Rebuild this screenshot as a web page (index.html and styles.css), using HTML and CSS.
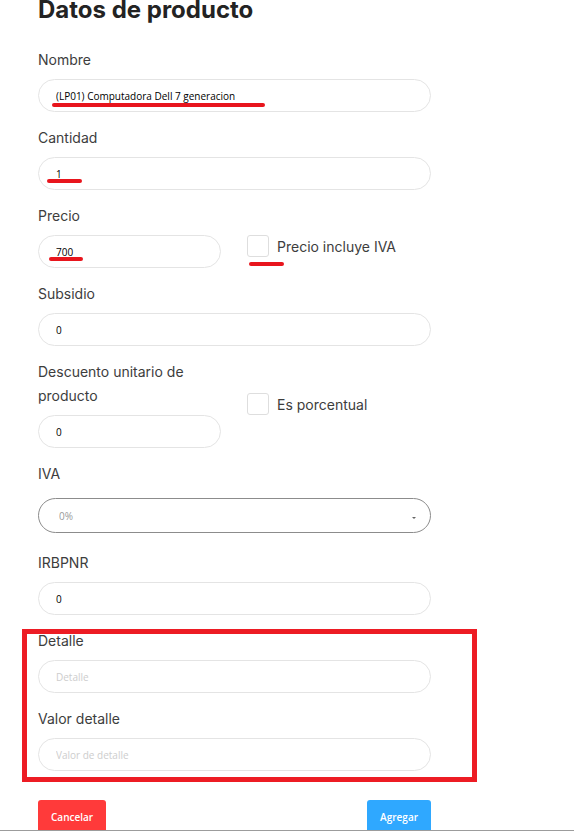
FILE: index.html
```html
<!DOCTYPE html>
<html lang="es">
<head>
    <meta charset="UTF-8">
    <meta name="viewport" content="width=device-width, initial-scale=1.0">
    <title>Datos de producto</title>
    <link rel="stylesheet" href="styles.css">
</head>
<body>
    <div class="page">
        <div class="container">
            <h2 class="title">Datos de producto</h2>
            <form id="product-form">
                <div class="form-group">
                    <label for="nombre">Nombre</label>
                    <div class="field">
                        <input id="nombre" type="text" value="(LP01) Computadora Dell 7 generacion">
                        <span class="mark mark-nombre"></span>
                    </div>
                </div>
                <div class="form-group">
                    <label for="cantidad">Cantidad</label>
                    <div class="field">
                        <input id="cantidad" type="text" value="1">
                        <span class="mark mark-cantidad"></span>
                    </div>
                </div>
                <div class="form-row row-precio">
                    <div class="form-group">
                        <label for="precio">Precio</label>
                        <div class="field">
                            <input id="precio" type="text" value="700">
                            <span class="mark mark-precio"></span>
                        </div>
                    </div>
                    <label class="check">
                        <span class="box-wrap">
                            <input type="checkbox" name="incluyeIva">
                            <span class="mark mark-check"></span>
                        </span>
                        <span>Precio incluye IVA</span>
                    </label>
                </div>
                <div class="form-group">
                    <label for="subsidio">Subsidio</label>
                    <input id="subsidio" type="text" value="0">
                </div>
                <div class="form-row row-descuento">
                    <div class="form-group">
                        <label for="descuento">Descuento unitario de producto</label>
                        <input id="descuento" type="text" value="0">
                    </div>
                    <label class="check">
                        <span class="box-wrap">
                            <input type="checkbox" name="esPorcentual">
                        </span>
                        <span>Es porcentual</span>
                    </label>
                </div>
                <div class="form-group group-select">
                    <label for="iva">IVA</label>
                    <div class="select-wrap">
                        <select id="iva">
                            <option>0%</option>
                            <option>12%</option>
                        </select>
                    </div>
                </div>
                <div class="form-group">
                    <label for="irbpnr">IRBPNR</label>
                    <input id="irbpnr" type="text" value="0">
                </div>
                <!-- bloque marcado en rojo -->
                <div class="highlight">
                    <div class="form-group">
                        <label for="detalle">Detalle</label>
                        <input id="detalle" type="text" placeholder="Detalle">
                    </div>
                    <div class="form-group">
                        <label for="valorDetalle">Valor detalle</label>
                        <input id="valorDetalle" type="text" placeholder="Valor de detalle">
                    </div>
                </div>
                <div class="actions">
                    <button type="button" class="btn btn-cancel">Cancelar</button>
                    <button type="submit" class="btn btn-add">Agregar</button>
                </div>
            </form>
        </div>
    </div>
</body>
</html>
```

FILE: styles.css
```css
body { margin: 0; background: #fff; font-family: Inter, "Noto Sans", sans-serif; }
.page { height: 830px; overflow: hidden; border-bottom: 1px solid #9c9c9c; }
.container { width: 393px; margin-left: 38px; }
.title { margin: 0 0 28px; font-size: 24px; line-height: 20px; font-weight: 700; color: #232323; }

.form-group { margin-bottom: 14px; }
.form-group label { display: block; font-size: 14px; line-height: 24px; color: #3d3d3d; }
.form-group input { display: block; width: 100%; height: 33px; margin-top: 7px; padding: 0 17px; border: 1px solid #e4e4e4; border-radius: 17px; box-sizing: border-box; background: #fff; font-family: "Open Sans", sans-serif; font-size: 10px; color: #000; outline: none; }
.form-group input::placeholder { color: #cdcdcd; }
.field { position: relative; }

.form-row { display: grid; grid-template-columns: 183px 1fr; column-gap: 26px; margin-bottom: 14px; }
.form-row .form-group { margin-bottom: 0; }
.check { display: flex; align-items: center; gap: 8px; font-size: 14px; color: #3d3d3d; }
.row-precio .check { align-self: end; margin-bottom: 11px; }
.row-descuento .check { align-self: center; }
.box-wrap { position: relative; display: block; width: 22px; height: 22px; }
.box-wrap input { appearance: none; display: block; width: 22px; height: 22px; margin: 0; border: 1px solid #dedede; border-radius: 3px; background: #fff; box-sizing: border-box; }

.group-select { margin-bottom: 18px; }
.select-wrap { position: relative; margin-top: 12px; }
.select-wrap select { appearance: none; display: block; width: 100%; height: 35px; padding: 0 20px; border: 1px solid #8c8c8c; border-radius: 18px; background: #fff; font-family: "Open Sans", sans-serif; font-size: 10px; color: #9a9a9a; outline: none; }
.select-wrap::after { content: ""; position: absolute; right: 15px; top: 19px; border-left: 2px solid transparent; border-right: 2px solid transparent; border-top: 2px solid #666; }

/* marcas rojas de la captura */
.mark { position: absolute; height: 4px; border-radius: 2px; background: #e8151d; }
.mark-nombre { left: 14px; top: 24px; width: 213px; }
.mark-cantidad { left: 9px; top: 22px; width: 35px; }
.mark-precio { left: 11px; top: 22px; width: 34px; }
.mark-check { left: 2px; top: 27px; width: 35px; }

.highlight { position: relative; }
.highlight .form-group:last-child { margin-bottom: 0; }
.highlight::after { content: ""; position: absolute; top: 0; left: -16px; right: -46px; bottom: -11px; border: 5px solid #ed1c24; pointer-events: none; }

.actions { display: flex; justify-content: space-between; margin-top: 29px; }
.btn { height: 34px; padding: 0 13px; border: none; border-radius: 3px 3px 0 0; font-family: "Open Sans", sans-serif; font-size: 10px; font-weight: 600; color: #fff; cursor: pointer; }
.btn-cancel { background-color: #ff3a3a; }
.btn-add { background-color: #2fa8ff; }
```
